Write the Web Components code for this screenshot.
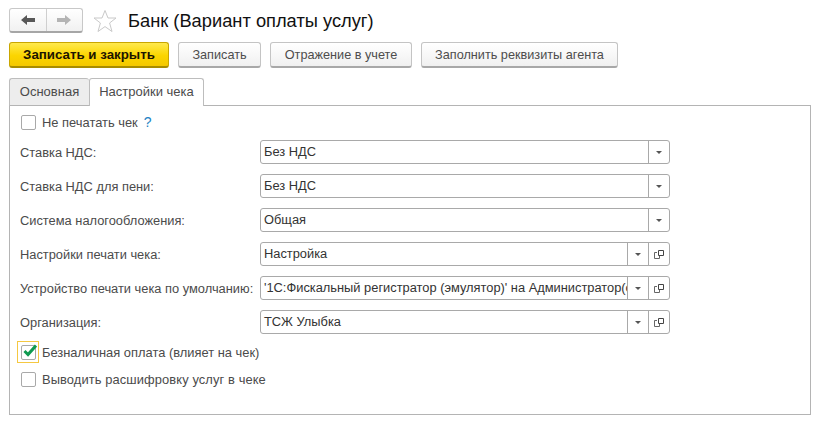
<!DOCTYPE html>
<html>
<head>
<meta charset="utf-8">
<style>
  html, body { margin: 0; background: #fff; }
  body { width: 818px; height: 422px; overflow: hidden; font: 13px "Liberation Sans", Arial, sans-serif; color: #4b4b4b; }
</style>
</head>
<body>
<bank-form></bank-form>
<script>
class TitleBar extends HTMLElement {
  constructor() {
    super();
    this.attachShadow({ mode: 'open' });
    this.shadowRoot.innerHTML = `
    <style>
      :host { display: flex; align-items: center; height: 27px; padding: 7px 0 0 9px; }
      .nav { display: flex; width: 74px; height: 25px; box-sizing: border-box; border: 1px solid #c8c8c8; border-bottom: 2px solid #a6a6a6; border-radius: 3px; background: linear-gradient(#fff, #f1f1f1); }
      .nav div { flex: 1; display: flex; align-items: center; justify-content: center; }
      .nav div + div { border-left: 1px solid #cfcfcf; }
      .star { margin-left: 10px; display: block; }
      h1 { margin: 0 0 0 11px; font: 18.3px "Liberation Sans", Arial, sans-serif; color: #111; white-space: nowrap; }
    </style>
    <div class="nav">
      <div><svg width="16" height="12" viewBox="0 0 16 12"><path d="M1 6 7 1V4H15V8H7V11Z" fill="#585858"/></svg></div>
      <div><svg width="16" height="12" viewBox="0 0 16 12"><path d="M15 6 9 1V4H1V8H9V11Z" fill="#b4b4b4"/></svg></div>
    </div>
    <svg class="star" width="24" height="24" viewBox="0 0 24 24"><path d="M12 1.5 15 9H23L16.6 14 19 22.5 12 17.6 5 22.5 7.4 14 1 9H9Z" fill="#fff" stroke="#c9c9c9"/></svg>
    <h1><slot></slot></h1>`;
  }
}

class ActionButton extends HTMLElement {
  constructor() {
    super();
    this.attachShadow({ mode: 'open' });
    this.shadowRoot.innerHTML = `
    <style>
      :host { display: flex; align-items: center; justify-content: center; height: 26px; box-sizing: border-box; border: 1px solid #c4c4c4; border-bottom: 2px solid #a8a8a8; border-radius: 3px; background: linear-gradient(#fff, #f0f0f0); color: #4d4d4d; font-size: 12.7px; white-space: nowrap; }
      :host([primary]) { border-color: #c9a600; border-bottom-color: #a88c00; background: linear-gradient(#ffe94d, #fbd500 55%, #f4c800); color: #1c1500; font-weight: bold; font-size: 13.3px; }
    </style>
    <slot></slot>`;
  }
}

class TabStrip extends HTMLElement {
  constructor() {
    super();
    this.attachShadow({ mode: 'open' });
    this.shadowRoot.innerHTML = `
    <style>
      :host { display: flex; height: 28px; margin: 10px 0 0 9px; position: relative; z-index: 1; font-size: 13px; }
      div { display: flex; align-items: center; justify-content: center; box-sizing: border-box; padding-bottom: 2px; border: 1px solid #bdbdbd; border-radius: 3px 3px 0 0; }
      .off { width: 80px; background: #ededed; border-bottom-color: #b4b4b4; border-right: 0; }
      .on { width: 115px; background: #fff; border-bottom: 0; }
    </style>
    <div class="off">Основная</div>
    <div class="on">Настройки чека</div>`;
  }
}

class CheckField extends HTMLElement {
  constructor() {
    super();
    this.attachShadow({ mode: 'open' });
    this.shadowRoot.innerHTML = `
    <style>
      :host { display: flex; align-items: center; height: 15px; font-size: 12.9px; white-space: nowrap; }
      .wrap { width: 15px; height: 15px; margin-right: 6px; position: relative; }
      .box { width: 15px; height: 15px; box-sizing: border-box; border: 1px solid #a9a9a9; border-radius: 2px; background: #fff; }
      .text { margin-top: -1px; }
      :host([checked]) .wrap::before { content: ""; position: absolute; left: -4px; top: -4px; width: 20px; height: 20px; border: 1px solid #f5c842; }
      svg { position: absolute; left: 1px; top: -3px; display: none; }
      :host([checked]) svg { display: block; }
    </style>
    <div class="wrap"><div class="box"></div>
      <svg width="15" height="16" viewBox="0 0 15 16"><path d="M2.5 9 6 12.5 14 3.5" fill="none" stroke="#0f9a50" stroke-width="3"/></svg>
    </div>
    <div class="text"><slot></slot></div>`;
  }
}

class FormRow extends HTMLElement {
  constructor() {
    super();
    this.attachShadow({ mode: 'open' });
    const btnOpen = this.hasAttribute('open-btn') ? `<div class="btn"><svg width="10" height="9" viewBox="0 0 10 9"><path d="M4.5 .5H9.5V5.5H4.5Z" fill="none" stroke="#444"/><path d="M3 2.5H.5V8.5H5.5V6" fill="none" stroke="#666"/></svg></div>` : '';
    this.shadowRoot.innerHTML = `
    <style>
      :host { display: grid; grid-template-columns: 240px 410px; align-items: center; height: 24px; font-size: 12.85px; white-space: nowrap; }
      .input { display: flex; height: 24px; box-sizing: border-box; border: 1px solid #a9a9a9; border-radius: 3px; background: #fff; }
      .val { flex: 1; min-width: 0; overflow: hidden; padding-left: 3px; line-height: 22px; color: #333; }
      .btn { width: 21px; box-sizing: border-box; flex: none; display: flex; align-items: center; justify-content: center; border-left: 1px solid #a9a9a9; }
      .arrow { width: 0; height: 0; border: 3px solid transparent; border-top: 3px solid #555; border-bottom: 0; }
    </style>
    <div><slot name="label"></slot></div>
    <div class="input">
      <div class="val"><slot></slot></div>
      <div class="btn"><div class="arrow"></div></div>
      ${btnOpen}
    </div>`;
  }
}

class BankForm extends HTMLElement {
  constructor() {
    super();
    this.attachShadow({ mode: 'open' });
    this.shadowRoot.innerHTML = `
    <style>
      :host { display: block; }
      .actions { display: flex; gap: 9px; margin: 8px 0 0 9px; }
      .panel { margin: -1px 0 0 9px; width: 802px; height: 310px; box-sizing: border-box; border: 1px solid #b4b4b4; padding: 9px 11px; }
      .help { color: #1e83c4; font-size: 14px; margin-left: 6px; }
      .rows { display: flex; flex-direction: column; gap: 10px; margin: 10px 0 0 -1px; }
      .checks { display: flex; flex-direction: column; gap: 12px; margin-top: 11px; }
    </style>
    <title-bar>Банк (Вариант оплаты услуг)</title-bar>
    <div class="actions">
      <action-button primary style="width:160px">Записать и закрыть</action-button>
      <action-button style="width:83px">Записать</action-button>
      <action-button style="width:142px">Отражение в учете</action-button>
      <action-button style="width:197px">Заполнить реквизиты агента</action-button>
    </div>
    <tab-strip></tab-strip>
    <div class="panel">
      <check-field>Не печатать чек<span class="help">?</span></check-field>
      <div class="rows">
        <form-row><span slot="label">Ставка НДС:</span>Без НДС</form-row>
        <form-row><span slot="label">Ставка НДС для пени:</span>Без НДС</form-row>
        <form-row><span slot="label">Система налогообложения:</span>Общая</form-row>
        <form-row open-btn><span slot="label">Настройки печати чека:</span>Настройка</form-row>
        <form-row open-btn><span slot="label">Устройство печати чека по умолчанию:</span>'1С:Фискальный регистратор (эмулятор)' на Администратор(сервер)</form-row>
        <form-row open-btn><span slot="label">Организация:</span>ТСЖ Улыбка</form-row>
      </div>
      <div class="checks">
        <check-field checked>Безналичная оплата (влияет на чек)</check-field>
        <check-field style="letter-spacing:.1px">Выводить расшифровку услуг в чеке</check-field>
      </div>
    </div>`;
  }
}

customElements.define('title-bar', TitleBar);
customElements.define('action-button', ActionButton);
customElements.define('tab-strip', TabStrip);
customElements.define('check-field', CheckField);
customElements.define('form-row', FormRow);
customElements.define('bank-form', BankForm);
</script>
</body>
</html>
